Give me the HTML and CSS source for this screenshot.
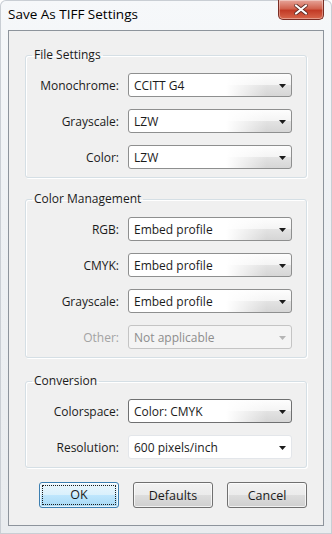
FILE: index.html
```html
<!DOCTYPE html>
<html lang="en">
<head>
  <meta charset="UTF-8">
  <meta name="viewport" content="width=device-width, initial-scale=1.0">
  <title>Save As TIFF Settings</title>
  <link rel="stylesheet" href="styles.css">
</head>
<body>
  <div class="window">
    <div class="titlebar">
      <span class="title">Save As TIFF Settings</span>
      <button class="close" aria-label="Close">
        <svg width="14" height="11" viewBox="0 0 14 11">
          <path d="M2 1.5 L12 9.5 M12 1.5 L2 9.5" stroke="#5a2a24" stroke-width="3.6" stroke-linecap="round"/>
          <path d="M2 1.5 L12 9.5 M12 1.5 L2 9.5" stroke="#fff" stroke-width="2.2" stroke-linecap="round"/>
        </svg>
      </button>
    </div>

    <div class="client">
      <!-- File settings -->
      <fieldset class="group">
        <legend>File Settings</legend>
        <div class="row">
          <label>Monochrome:</label>
          <div class="combo"><span class="value">CCITT G4</span><span class="arrow"><svg width="7" height="4" viewBox="0 0 7 4"><path d="M0 0 H7 L3.5 4 Z"/></svg></span></div>
        </div>
        <div class="row">
          <label>Grayscale:</label>
          <div class="combo"><span class="value">LZW</span><span class="arrow"><svg width="7" height="4" viewBox="0 0 7 4"><path d="M0 0 H7 L3.5 4 Z"/></svg></span></div>
        </div>
        <div class="row">
          <label>Color:</label>
          <div class="combo"><span class="value">LZW</span><span class="arrow"><svg width="7" height="4" viewBox="0 0 7 4"><path d="M0 0 H7 L3.5 4 Z"/></svg></span></div>
        </div>
      </fieldset>

      <!-- Color management -->
      <fieldset class="group">
        <legend>Color Management</legend>
        <div class="row">
          <label>RGB:</label>
          <div class="combo"><span class="value">Embed profile</span><span class="arrow"><svg width="7" height="4" viewBox="0 0 7 4"><path d="M0 0 H7 L3.5 4 Z"/></svg></span></div>
        </div>
        <div class="row">
          <label>CMYK:</label>
          <div class="combo"><span class="value">Embed profile</span><span class="arrow"><svg width="7" height="4" viewBox="0 0 7 4"><path d="M0 0 H7 L3.5 4 Z"/></svg></span></div>
        </div>
        <div class="row">
          <label>Grayscale:</label>
          <div class="combo"><span class="value">Embed profile</span><span class="arrow"><svg width="7" height="4" viewBox="0 0 7 4"><path d="M0 0 H7 L3.5 4 Z"/></svg></span></div>
        </div>
        <div class="row disabled">
          <label>Other:</label>
          <div class="combo"><span class="value">Not applicable</span><span class="arrow"><svg width="7" height="4" viewBox="0 0 7 4"><path d="M0 0 H7 L3.5 4 Z"/></svg></span></div>
        </div>
      </fieldset>

      <!-- Conversion -->
      <fieldset class="group">
        <legend>Conversion</legend>
        <div class="row">
          <label>Colorspace:</label>
          <div class="combo hot"><span class="value">Color: CMYK</span><span class="arrow"><svg width="7" height="4" viewBox="0 0 7 4"><path d="M0 0 H7 L3.5 4 Z"/></svg></span></div>
        </div>
        <div class="row">
          <label>Resolution:</label>
          <div class="combo editable"><span class="value">600 pixels/inch</span><span class="arrow"><svg width="7" height="4" viewBox="0 0 7 4"><path d="M0 0 H7 L3.5 4 Z"/></svg></span></div>
        </div>
      </fieldset>

      <div class="buttons">
        <button class="btn default"><span>OK</span></button>
        <button class="btn"><span>Defaults</span></button>
        <button class="btn"><span>Cancel</span></button>
      </div>
    </div>
  </div>
</body>
</html>
```

FILE: styles.css
```css
* {
  box-sizing: border-box;
}
body {
  margin: 0;
  font-family: "Open Sans", "Noto Sans", sans-serif;
  font-size: 12px;
  color: #1b1b1b;
  background: #fff;
}
.window {
  width: 332px;
  height: 534px;
  display: flex;
  flex-direction: column;
  background: linear-gradient(#f6f8fa, #eef1f4 40%, #e9ecef);
  border-radius: 6px 6px 0 0;
  box-shadow: inset 0 0 0 1px #c9ced4;
}
.titlebar {
  height: 30px;
  display: flex;
  align-items: flex-start;
  justify-content: space-between;
  padding-left: 8px;
  padding-right: 8px;
}
.title {
  font-size: 13.5px;
  line-height: 16px;
  margin-top: 6px;
  color: #000;
}
.close {
  width: 46px;
  height: 20px;
  margin: 0;
  padding: 0;
  border: 1px solid #7a2d24;
  border-top: none;
  border-radius: 0 0 5px 5px;
  background: linear-gradient(#e7a59a, #d1634f 45%, #c23b26 55%, #d8674c);
  box-shadow: inset 0 0 0 1px rgba(255, 255, 255, 0.35);
  display: flex;
  align-items: center;
  justify-content: center;
}
.client {
  flex: 1;
  margin: 0 8px 8px;
  border: 1px solid #8d949c;
  background: #f0f0f0;
  padding: 16px 16px 0;
  display: flex;
  flex-direction: column;
}
.group {
  margin: 0 0 15px;
  padding: 10px 14px 8px 0;
  border: 1px solid #d5dfe5;
  border-radius: 3px;
  box-shadow: inset 1px 1px 0 #fff, 1px 1px 0 #fff;
  display: flex;
  flex-direction: column;
  gap: 12px;
}
.group:first-of-type {
  margin-bottom: 13px;
}
.group:last-of-type {
  margin-bottom: 14px;
}
.group legend {
  margin-left: 6px;
  padding: 0 2px;
  line-height: 16px;
  color: #1b1b1b;
}
.row {
  display: flex;
  align-items: center;
  gap: 9px;
}
.row label {
  width: 93px;
  text-align: right;
}
.combo {
  width: 164px;
  height: 24px;
  display: flex;
  align-items: center;
  border: 1px solid #8e8f8f;
  border-radius: 3px;
  background:
    linear-gradient(to right, #fff 60%, rgba(255, 255, 255, 0) 85%),
    linear-gradient(#fdfdfd, #f4f4f4 50%, #e3e3e3 51%, #d6d6d6);
}
.combo .value {
  flex: 1;
  padding-left: 5px;
  white-space: nowrap;
}
.combo .arrow {
  width: 17px;
  display: flex;
  justify-content: center;
  padding-top: 1px;
}
.combo .arrow svg {
  fill: #1b1b1b;
}
.combo.hot {
  border-color: #6f7071;
}
.combo.editable {
  background: #fff;
  border-color: #e3e6ea;
}
.row.disabled label {
  color: #a3a3a3;
}
.row.disabled .combo {
  border-color: #c4c4c4;
  background: #f4f4f4;
  color: #8d8d8d;
}
.row.disabled .combo .arrow svg {
  fill: #b5b5b5;
}
.buttons {
  display: flex;
  justify-content: flex-end;
  gap: 14px;
}
.btn {
  width: 80px;
  height: 26px;
  padding: 0;
  border: 1px solid #707070;
  border-radius: 3px;
  font-family: inherit;
  font-size: 12.5px;
  color: #1b1b1b;
  background: linear-gradient(#f2f2f2, #ebebeb 50%, #dddddd 51%, #cfcfcf);
  box-shadow: inset 0 0 0 1px rgba(255, 255, 255, 0.7);
}
.btn span {
  display: block;
}
.btn.default {
  border-color: #3c7fb1;
  background: linear-gradient(#eaf6fd, #d9f0fc 50%, #bee6fd 51%, #a7d9f5);
  padding: 2px;
}
.btn.default span {
  height: 100%;
  line-height: 18px;
  border: 1px dotted #1b1b1b;
  border-radius: 1px;
}
```
